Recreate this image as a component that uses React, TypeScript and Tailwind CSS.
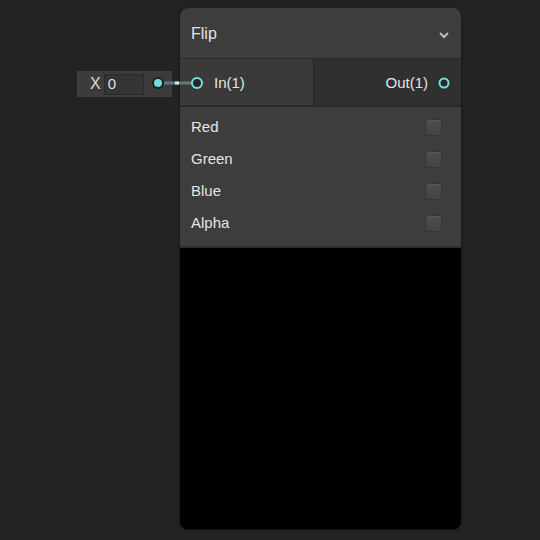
import React from 'react'

const font = { fontFamily: '"Liberation Sans", Arial, sans-serif' }

const Checkbox: React.FC = () => (
  <div className="w-[17px] h-[17px] rounded-[3px] border border-[#363636] bg-gradient-to-b from-[#4d4d4d] to-[#434343] shadow-[inset_0_1px_0_rgba(255,255,255,0.06)]" />
)

const OptionRow: React.FC<{ label: string }> = ({ label }) => (
  <div className="h-[32px] flex items-center justify-between pl-[11px] pr-[19px]">
    <span className="text-[15px] text-[#e4e4e4]">{label}</span>
    <Checkbox />
  </div>
)

export default function App() {
  return (
    <div className="relative w-[540px] h-[540px] bg-[#232323] overflow-hidden" style={font}>
      {/* input widget */}
      <div className="absolute left-[77px] top-[71px] w-[95px] h-[26px] bg-[#3c3c3c] flex items-center">
        <span className="ml-[13px] text-[16px] text-[#dcdcdc]">X</span>
        <div className="ml-[3px] w-[40px] h-[21px] bg-[#343434] border border-[#2a2a2a] flex items-center pl-[3px] text-[15px] text-[#e0e0e0]">
          0
        </div>
      </div>

      {/* node */}
      <div className="absolute left-[180px] top-[8px] w-[281px] h-[521px] rounded-[8px] bg-black overflow-hidden flex flex-col shadow-[0_1px_3px_rgba(0,0,0,0.5)]">
        <div className="h-[51px] bg-[#3d3d3d] flex items-center justify-between pl-[11px] pr-[11px] border-b border-[#2a2a2a]">
          <span className="text-[16px] text-[#e4e4e4] mt-[1px]">Flip</span>
          <svg width="12" height="8" viewBox="0 0 12 8" className="mt-[4px]">
            <path d="M2 2 L6 6 L10 2" fill="none" stroke="#bdbdbd" strokeWidth="2" />
          </svg>
        </div>
        <div className="h-[48px] flex border-b-2 border-[#2a2a2a]">
          <div className="w-[134px] bg-[#3a3a3a] border-r border-[#262626] flex items-center pl-[34px]">
            <span className="text-[15px] text-[#e4e4e4] mt-[2px]">In(1)</span>
          </div>
          <div className="flex-1 bg-[#303030] flex items-center justify-end pr-[11px]">
            <span className="text-[15px] text-[#e4e4e4] mt-[2px]">Out(1)</span>
            <svg width="12" height="12" className="ml-[10px] mt-[2px]">
              <circle cx="6" cy="6" r="4.5" fill="#2a2a2a" stroke="#74dfe6" strokeWidth="2" />
            </svg>
          </div>
        </div>
        <div className="bg-[#3d3d3d] pt-[4px] pb-[7px] border-b-2 border-[#2b2b2b]">
          <OptionRow label="Red" />
          <OptionRow label="Green" />
          <OptionRow label="Blue" />
          <OptionRow label="Alpha" />
        </div>
        <div className="flex-1 bg-black" />
      </div>

      {/* connection wire over the node edge */}
      <svg className="absolute left-[150px] top-[74px] z-10" width="60" height="18">
        <line x1="8" y1="9" x2="42" y2="9" stroke="#607878" strokeWidth="3" />
        <rect x="25" y="7.5" width="4" height="3" fill="#bfeff2" />
        <circle cx="8" cy="9" r="5" fill="#6fdde4" stroke="#1e1e1e" strokeWidth="2" />
        <circle cx="47" cy="9" r="5" fill="#262626" stroke="#74dfe6" strokeWidth="2" />
      </svg>
    </div>
  )
}
